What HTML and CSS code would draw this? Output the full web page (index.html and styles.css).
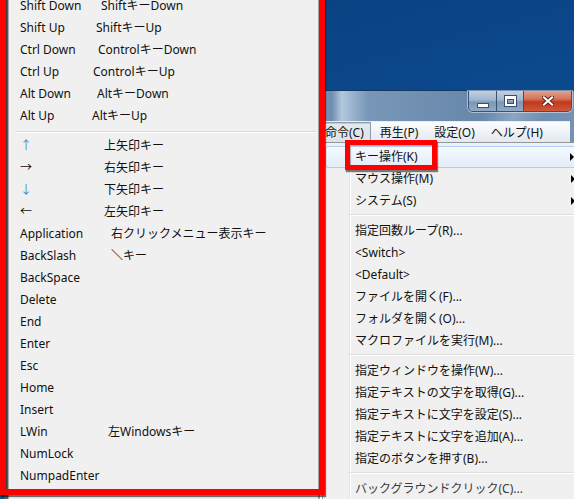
FILE: index.html
```html
<!DOCTYPE html>
<html lang="ja">
<head>
<meta charset="utf-8">
<title>キー操作</title>
<link rel="stylesheet" href="styles.css">
</head>
<body>
<div class="desktop">
  <div class="window">
    <div class="titlebar">
      <div class="caption-buttons">
        <div class="cbtn cbtn-min"><span class="min-glyph"></span></div>
        <div class="cbtn cbtn-max"><span class="max-glyph"></span></div>
        <div class="cbtn cbtn-close">
          <svg width="12" height="10" viewBox="0 0 12 10">
            <path d="M2 1.5 L10 8.5 M10 1.5 L2 8.5" stroke="#5a1a10" stroke-width="4" stroke-linecap="square"/>
            <path d="M2 1.5 L10 8.5 M10 1.5 L2 8.5" stroke="#ffffff" stroke-width="2.2" stroke-linecap="square"/>
          </svg>
        </div>
      </div>
    </div>
    <div class="menubar">
      <span class="mitem pressed">命令(C)</span>
      <span class="mitem">再生(P)</span>
      <span class="mitem">設定(O)</span>
      <span class="mitem">ヘルプ(H)</span>
    </div>
    <div class="client"></div>
  </div>

  <div class="dropdown">
    <div class="ditem hot"><span>キー操作(K)</span><i class="sub-arrow"></i></div>
    <div class="ditem"><span>マウス操作(M)</span><i class="sub-arrow"></i></div>
    <div class="ditem"><span>システム(S)</span><i class="sub-arrow"></i></div>
    <div class="dsep"></div>
    <div class="ditem"><span>指定回数ループ(R)...</span></div>
    <div class="ditem"><span>&lt;Switch&gt;</span></div>
    <div class="ditem"><span>&lt;Default&gt;</span></div>
    <div class="ditem"><span>ファイルを開く(F)...</span></div>
    <div class="ditem"><span>フォルダを開く(O)...</span></div>
    <div class="ditem"><span>マクロファイルを実行(M)...</span></div>
    <div class="dsep"></div>
    <div class="ditem"><span>指定ウィンドウを操作(W)...</span></div>
    <div class="ditem"><span>指定テキストの文字を取得(G)...</span></div>
    <div class="ditem"><span>指定テキストに文字を設定(S)...</span></div>
    <div class="ditem"><span>指定テキストに文字を追加(A)...</span></div>
    <div class="ditem"><span>指定のボタンを押す(B)...</span></div>
    <div class="dsep"></div>
    <div class="ditem dim"><span>バックグラウンドクリック(C)...</span></div>
  </div>

  <div class="submenu">
    <div class="sitem"><span class="key k81">Shift Down</span><span>ShiftキーDown</span></div>
    <div class="sitem"><span class="key k76">Shift Up</span><span>ShiftキーUp</span></div>
    <div class="sitem"><span class="key k78">Ctrl Down</span><span>ControlキーDown</span></div>
    <div class="sitem"><span class="key k73">Ctrl Up</span><span>ControlキーUp</span></div>
    <div class="sitem"><span class="key k77">Alt Down</span><span>AltキーDown</span></div>
    <div class="sitem"><span class="key k72">Alt Up</span><span>AltキーUp</span></div>
    <div class="ssep"></div>
    <div class="sitem"><span class="key k84 arrow-blue">↑</span><span>上矢印キー</span></div>
    <div class="sitem"><span class="key k84">→</span><span>右矢印キー</span></div>
    <div class="sitem"><span class="key k84 arrow-blue">↓</span><span>下矢印キー</span></div>
    <div class="sitem"><span class="key k84">←</span><span>左矢印キー</span></div>
    <div class="sitem"><span class="key k91">Application</span><span>右クリックメニュー表示キー</span></div>
    <div class="sitem"><span class="key k91">BackSlash</span><span>＼キー</span></div>
    <div class="sitem"><span class="key">BackSpace</span></div>
    <div class="sitem"><span class="key">Delete</span></div>
    <div class="sitem"><span class="key">End</span></div>
    <div class="sitem"><span class="key">Enter</span></div>
    <div class="sitem"><span class="key">Esc</span></div>
    <div class="sitem"><span class="key">Home</span></div>
    <div class="sitem"><span class="key">Insert</span></div>
    <div class="sitem"><span class="key k88">LWin</span><span>左Windowsキー</span></div>
    <div class="sitem"><span class="key">NumLock</span></div>
    <div class="sitem"><span class="key">NumpadEnter</span></div>
  </div>

  <div class="callout callout-list"></div>
  <div class="callout callout-key"></div>
</div>
</body>
</html>
```

FILE: styles.css
```css
html, body {
  margin: 0;
  padding: 0;
}

body {
  width: 574px;
  height: 499px;
  overflow: hidden;
  font-family: "Noto Sans", "Noto Sans CJK JP", sans-serif;
  font-size: 12px;
  color: #111111;
}

.desktop {
  position: relative;
  width: 574px;
  height: 499px;
  overflow: hidden;
  background: linear-gradient(165deg, #093f7c 0%, #0c4c92 45%, #0f549c 70%, #0b488a 100%);
}

/* ---------- window ---------- */
.window {
  position: absolute;
  left: 250px;
  top: 90px;
  width: 312px;
  height: 430px;
  padding: 0 8px;
  border-top: 1px solid #143a63;
  background:
    linear-gradient(115deg, rgba(255,255,255,0) 0%, rgba(255,255,255,0) 46%, rgba(255,255,255,0.22) 52%, rgba(255,255,255,0) 58%, rgba(255,255,255,0) 100%),
    linear-gradient(90deg, #7e9bba 0%, #6f8fb2 25%, #b3c7dc 28%, #7897b8 36%, #6787ab 70%, #7493b5 100%);
}

.titlebar {
  height: 30px;
  display: flex;
  justify-content: flex-end;
  align-items: flex-start;
}

.caption-buttons {
  display: flex;
  margin-right: -2px;
  border: 1px solid #3b5171;
  border-top: none;
  border-radius: 0 0 5px 5px;
  overflow: hidden;
  box-shadow: 0 0 0 1px rgba(255,255,255,0.45);
}

.cbtn {
  height: 20px;
  display: flex;
  align-items: center;
  justify-content: center;
}

.cbtn-min {
  width: 27px;
  border-right: 1px solid #3b5171;
  background: linear-gradient(#c0d0e0 0%, #9fb6cf 45%, #7c98b8 55%, #8fa9c6 100%);
}

.cbtn-max {
  width: 26px;
  border-right: 1px solid #3b5171;
  background: linear-gradient(#c0d0e0 0%, #9fb6cf 45%, #7c98b8 55%, #8fa9c6 100%);
}

.cbtn-close {
  width: 47px;
  background: linear-gradient(#e2a393 0%, #d47259 40%, #c0391d 55%, #d0583a 100%);
}

.min-glyph {
  display: block;
  width: 10px;
  height: 3px;
  margin-top: 8px;
  background: #ffffff;
  border: 1px solid #3d4f66;
}

.max-glyph {
  display: block;
  width: 7px;
  height: 5px;
  border: 2px solid #ffffff;
  border-top-width: 3px;
  box-shadow: 0 0 0 1px #3d4f66, inset 0 0 0 1px #3d4f66;
}

.menubar {
  height: 21px;
  display: flex;
  align-items: center;
  padding-left: 60px;
  background: linear-gradient(#fbfcfe 0%, #eef2f7 50%, #e1e8f1 100%);
  border-top: 1px solid #e8eef5;
}

.mitem {
  height: 19px;
  line-height: 19px;
  padding: 0 6px;
  margin-right: 2px;
  border: 1px solid transparent;
  white-space: nowrap;
}

.mitem.pressed {
  border-color: #8e9bab;
  background: linear-gradient(#e4e9ef, #dbe2ea);
  box-shadow: inset 1px 1px 0 #c3ccd6;
}

.client {
  height: 400px;
  background: #ffffff;
}

/* ---------- dropdown menu ---------- */
.dropdown {
  position: absolute;
  left: 322px;
  top: 142px;
  width: 256px;
  height: 380px;
  padding: 3px 2px;
  background: #f0f0f0;
  border: 1px solid #979797;
}

.dropdown::before {
  content: "";
  position: absolute;
  left: 26px;
  top: 0;
  bottom: 0;
  width: 1px;
  background: #e2e3e3;
  box-shadow: 1px 0 0 #ffffff;
}

.ditem {
  position: relative;
  height: 22px;
  line-height: 22px;
  padding-left: 30px;
  padding-right: 6px;
  display: flex;
  justify-content: space-between;
  align-items: center;
  white-space: nowrap;
}

.ditem.hot {
  border: 1px solid #aecff7;
  border-radius: 3px;
  height: 20px;
  line-height: 20px;
  padding-left: 29px;
  background: linear-gradient(#f6f9fe 0%, #eaf1fb 60%, #e3ecf9 100%);
}

.ditem.dim {
  color: #3a3a3a;
}

.sub-arrow {
  display: block;
  width: 0;
  height: 0;
  border-left: 4px solid #000000;
  border-top: 4px solid transparent;
  border-bottom: 4px solid transparent;
}

.dsep {
  height: 8px;
  margin-left: 25px;
  position: relative;
}

.dsep::after {
  content: "";
  position: absolute;
  left: 0;
  right: 0;
  top: 2px;
  height: 1px;
  background: #e0e0e0;
  box-shadow: 0 1px 0 #ffffff;
}

/* ---------- key submenu ---------- */
.submenu {
  position: absolute;
  left: 4px;
  top: -8px;
  width: 310px;
  height: 540px;
  padding-top: 3px;
  background: #f0f0f0;
  border-left: 4px solid #5a5a5a;
  border-right: 2px solid #a3a3a3;
  box-shadow: inset 1px 0 0 #a8a8a8;
}

.sitem {
  height: 22px;
  line-height: 22px;
  padding-left: 12px;
  display: flex;
  white-space: nowrap;
}

.key {
  display: inline-block;
}

.k72 { width: 72px; }
.k73 { width: 73px; }
.k76 { width: 76px; }
.k77 { width: 77px; }
.k78 { width: 78px; }
.k81 { width: 81px; }
.k84 { width: 84px; }
.k88 { width: 88px; }
.k91 { width: 91px; }

.arrow-blue {
  color: #4a86c8;
}

.ssep {
  height: 8px;
  position: relative;
  margin-left: 7px;
  margin-right: 2px;
}

.ssep::after {
  content: "";
  position: absolute;
  left: 0;
  right: 0;
  top: 4px;
  height: 1px;
  background: #d9d9d9;
  box-shadow: 0 1px 0 #ffffff;
}

/* ---------- red annotation boxes ---------- */
.callout {
  position: absolute;
  border-style: solid;
  border-color: #ff0000;
  box-sizing: border-box;
}

.callout-list {
  left: 0;
  top: -12px;
  width: 325px;
  height: 507px;
  border-width: 6px;
  box-shadow: 1px 2px 1px rgba(0,0,0,0.55), inset 1px 1px 1px rgba(0,0,0,0.35);
}

.callout-key {
  left: 345px;
  top: 140px;
  width: 92px;
  height: 30px;
  border-width: 5px;
  box-shadow: 1px 2px 1px rgba(0,0,0,0.5), inset 1px 1px 1px rgba(0,0,0,0.3);
}
```
